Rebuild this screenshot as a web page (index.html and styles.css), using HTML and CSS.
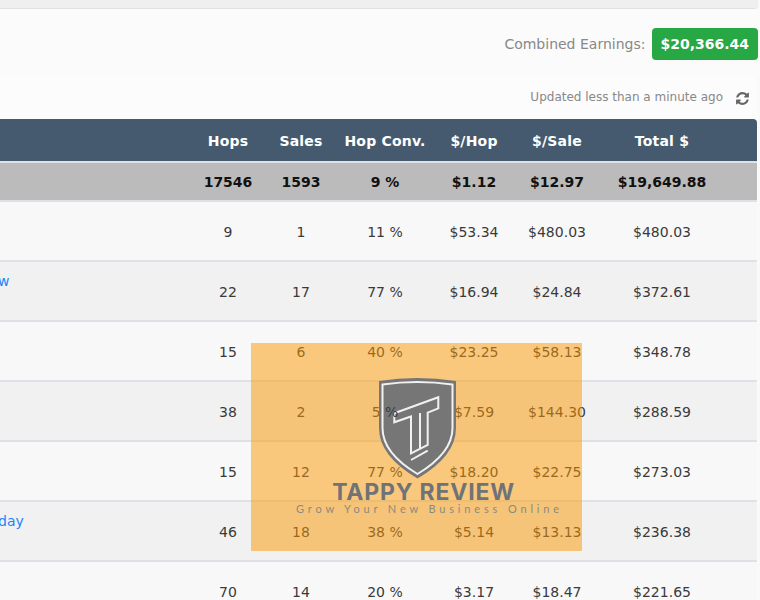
FILE: index.html

```html
<!DOCTYPE html>
<html lang="en">
<head>
  <meta charset="UTF-8" />
  <meta name="viewport" content="width=device-width, initial-scale=1.0" />
  <title>Earnings</title>
  <link rel="stylesheet" href="styles.css">
</head>
<body>
  <div class="page">
    <div class="top-strip"></div>

    <div class="earnings-bar">
      <span class="earnings-label">Combined Earnings:</span>
      <span class="earnings-badge">$20,366.44</span>
    </div>

    <div class="panel">
      <div class="panel-status">
        <span>Updated less than a minute ago</span>
        <svg class="refresh-icon" viewBox="0 0 1792 1792"><path d="M1639 1056q0 5-1 7-64 268-268 434.5t-478 166.5q-146 0-282.5-55t-243.5-157l-129 129q-19 19-45 19t-45-19-19-45v-448q0-26 19-45t45-19h448q26 0 45 19t19 45-19 45l-137 137q71 66 161 102t187 36q134 0 250-65t186-179q11-17 53-117 8-23 30-23h192q13 0 22.5 9.5t9.5 22.5zm25-800v448q0 26-19 45t-45 19h-448q-26 0-45-19t-19-45 19-45l138-138q-148-137-349-137-134 0-250 65t-186 179q-11 17-53 117-8 23-30 23h-199q-13 0-22.5-9.5t-9.5-22.5v-7q65-268 270-434.5t480-166.5q146 0 284 55.5t245 156.5l130-129q19-19 45-19t45 19 19 45z"/></svg>
      </div>

      <table class="stats">
        <colgroup>
          <col class="col-name"><col class="col-hops"><col class="col-sales"><col class="col-conv">
          <col class="col-hop"><col class="col-sale"><col class="col-total"><col class="col-end">
        </colgroup>
        <thead>
          <tr>
            <th></th><th>Hops</th><th>Sales</th><th>Hop Conv.</th><th>$/Hop</th><th>$/Sale</th><th>Total $</th><th></th>
          </tr>
        </thead>
        <tbody>
          <tr class="totals">
            <td></td><td>17546</td><td>1593</td><td>9 %</td><td>$1.12</td><td>$12.97</td><td>$19,649.88</td><td></td>
          </tr>
          <tr>
            <td></td><td>9</td><td>1</td><td>11 %</td><td>$53.34</td><td>$480.03</td><td>$480.03</td><td></td>
          </tr>
          <tr>
            <td class="name"><a href="#">w</a></td><td>22</td><td>17</td><td>77 %</td><td>$16.94</td><td>$24.84</td><td>$372.61</td><td></td>
          </tr>
          <tr>
            <td></td><td>15</td><td>6</td><td>40 %</td><td>$23.25</td><td>$58.13</td><td>$348.78</td><td></td>
          </tr>
          <tr>
            <td></td><td>38</td><td>2</td><td>5 <span class="over-mark">%</span></td><td>$7.59</td><td>$144.30</td><td>$288.59</td><td></td>
          </tr>
          <tr>
            <td></td><td>15</td><td>12</td><td>77 %</td><td>$18.20</td><td>$22.75</td><td>$273.03</td><td></td>
          </tr>
          <tr>
            <td class="name"><a href="#">day</a></td><td>46</td><td>18</td><td>38 %</td><td>$5.14</td><td>$13.13</td><td>$236.38</td><td></td>
          </tr>
          <tr>
            <td></td><td>70</td><td>14</td><td>20 %</td><td>$3.17</td><td>$18.47</td><td>$221.65</td><td></td>
          </tr>
        </tbody>
      </table>
    </div>

    <div class="watermark-box"></div>
    <div class="watermark">
      <svg class="shield" viewBox="0 0 78 101">
        <path class="shield-body" d="M0 3Q38 -3 77 3V50Q77 78 38.500 100.500Q0 78 0 50Z"/>
        <path class="shield-line" d="M3.500 6.500Q38 1.500 73.500 6.500V50Q73.500 75 38.500 96Q3.500 75 3.500 50Z"/>
        <path class="shield-line" d="M15.300 35.300L59.300 19.300V30.300L48.700 34.700V67L32 75.300V38.500L15.300 44.300Z"/>
        <path class="shield-line" d="M41 35V70M32 82L48.700 72.700"/>
      </svg>
      <div class="brand">TAPPY REVIEW</div>
      <div class="tagline">Grow Your New Business Online</div>
    </div>
  </div>
</body>
</html>
```

FILE: styles.css

```css
html, body {
  margin: 0;
  padding: 0;
}
body {
  font-family: "DejaVu Sans", Verdana, sans-serif;
  font-size: 14px;
  color: #3a3a3a;
  background-color: #f9f9f9;
}
.page {
  position: relative;
  width: 760px;
  height: 600px;
  overflow: hidden;
}
.top-strip {
  height: 8px;
  margin-right: 2px;
  background-color: #efefef;
  border-bottom: 1px solid #e2e2e2;
  border-bottom-right-radius: 4px;
}
.earnings-bar {
  display: flex;
  justify-content: flex-end;
  align-items: center;
  gap: 7px;
  height: 68px;
  padding: 1px 2px 0 0;
  box-sizing: border-box;
  background-color: #fbfbfb;
}
.earnings-label {
  color: #888;
}
.earnings-badge {
  padding: 8px 9px 8px 8px;
  color: #fff;
  font-weight: bold;
  background-color: #28a745;
  border-radius: 4px;
}
.panel {
  margin-right: 2px;
  background-color: #fcfcfc;
  border-top-right-radius: 6px;
}
.panel-status {
  display: flex;
  justify-content: flex-end;
  align-items: center;
  gap: 12px;
  height: 42px;
  padding: 0 8px 0 0;
  color: #888;
  font-size: 12px;
}
.refresh-icon {
  width: 15px;
  height: 15px;
  margin-top: 1px;
  fill: #666;
}
.panel-status span {
  margin-top: -3px;
}
.stats {
  width: 757px;
  table-layout: fixed;
  border-collapse: separate;
  border-spacing: 0;
}
.col-name { width: 190px; }
.col-hops { width: 76px; }
.col-sales { width: 70px; }
.col-conv { width: 98px; }
.col-hop { width: 80px; }
.col-sale { width: 86px; }
.col-total { width: 124px; }
.col-end { width: 33px; }
.stats th, .stats td {
  box-sizing: border-box;
  padding: 2px 0 0;
  text-align: center;
  white-space: nowrap;
}
.stats th {
  height: 44px;
  color: #fff;
  letter-spacing: 0.200px;
  background-color: #455a6e;
  border-bottom: 2px solid #dee2e6;
}
.stats th:last-child {
  border-top-right-radius: 4px;
}
.stats td {
  height: 60px;
  border-bottom: 2px solid #dee2e6;
  background-color: #f8f8f8;
}
.stats tbody tr:nth-child(odd) td {
  background-color: #f1f1f1;
}
.stats tbody tr:nth-child(even) td {
  background-color: #f8f8f8;
}
.stats tbody tr.totals td {
  height: 39px;
  padding: 0;
  color: #111;
  font-weight: bold;
  background-color: #bbb;
}
.stats td.name {
  padding-top: 11px;
  vertical-align: top;
  text-align: left;
}
.name a {
  margin-left: -2px;
  color: #1a85f7;
  text-decoration: none;
}
.over-mark {
  position: relative;
  z-index: 3;
}
.watermark-box {
  position: absolute;
  left: 251px;
  top: 343px;
  width: 331px;
  height: 208px;
  z-index: 1;
  background-color: rgba(252, 152, 0, 0.5);
}
.watermark {
  position: absolute;
  left: 251px;
  top: 378px;
  width: 331px;
  z-index: 2;
  display: flex;
  flex-direction: column;
  align-items: center;
}
.shield {
  display: block;
  width: 78px;
  height: 101px;
  margin-left: 3px;
}
.shield-body {
  fill: rgba(112, 114, 118, 0.95);
}
.shield-line {
  fill: none;
  stroke: #f1f1f1;
  stroke-width: 2;
}
.brand {
  margin: 1px 0 0 14px;
  color: #6f7378;
  font-family: Inter, sans-serif;
  font-size: 23px;
  font-weight: 700;
  letter-spacing: 0.800px;
  line-height: 24px;
  white-space: nowrap;
}
.tagline {
  margin-left: 26px;
  color: #8b8a80;
  font-family: Lato, sans-serif;
  font-size: 11px;
  letter-spacing: 3.850px;
  line-height: 9px;
  white-space: nowrap;
}
```
